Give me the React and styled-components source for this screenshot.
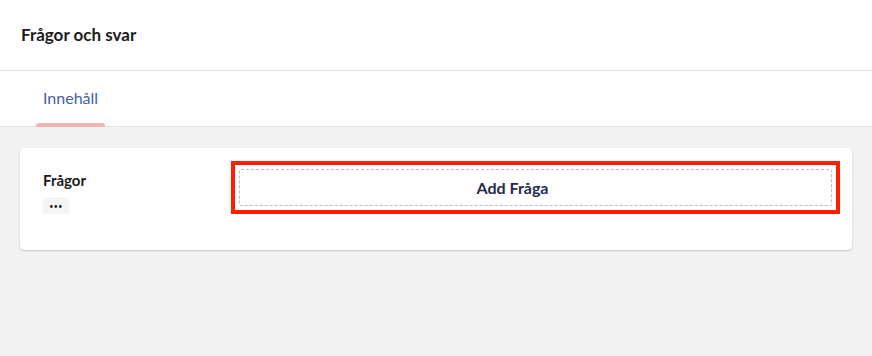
import React from "react";
import styled, { createGlobalStyle } from "styled-components";

const GlobalStyle = createGlobalStyle`
  html, body {
    margin: 0;
    padding: 0;
    background: #f3f2f1;
    font-family: Lato, "Noto Sans", sans-serif;
  }
`;

export default function App() {
  const tabs = [{ label: "Innehåll", active: true }];

  return (
    <Page>
      <GlobalStyle />
      {/* sidhuvud */}
      <Header>
        <Title>Frågor och svar</Title>
      </Header>
      {/* flikar */}
      <TabBar>
        {tabs.map((tab) => (
          <Tab key={tab.label} active={tab.active}>
            {tab.label}
          </Tab>
        ))}
      </TabBar>
      {/* innehåll */}
      <Content>
        <Card>
          <FieldLabelWrap>
            <FieldLabel>Frågor</FieldLabel>
            <MoreChip>•••</MoreChip>
          </FieldLabelWrap>
          <Highlight>
            <AddButton>Add Fråga</AddButton>
          </Highlight>
        </Card>
      </Content>
    </Page>
  );
}

const Page = styled.div`
  min-height: 356px;
  background: #f3f2f1;
  display: flex;
  flex-direction: column;
`;

const Header = styled.div`
  height: 71px;
  background: #fff;
  border-bottom: 1px solid #e4e4e4;
  display: flex;
  align-items: center;
  padding: 0 21px;
  box-sizing: border-box;
`;

const Title = styled.div`
  font-size: 17px;
  font-weight: 700;
  color: #1b1b1b;
  margin-top: -2px;
`;

const TabBar = styled.div`
  height: 56px;
  background: #fff;
  border-bottom: 1px solid #e4e4e4;
  display: flex;
  padding: 0 36px;
  box-sizing: border-box;
`;

const Tab = styled.div`
  position: relative;
  padding: 0 7px;
  display: flex;
  align-items: center;
  font-size: 16px;
  color: ${(props) => (props.active ? "#3e62ad" : "#555")};
  margin-top: -2px;

  &::after {
    content: "";
    display: ${(props) => (props.active ? "block" : "none")};
    position: absolute;
    left: 0;
    right: 0;
    bottom: -1px;
    height: 4px;
    border-radius: 3px 3px 0 0;
    background: #f2b4b0;
  }
`;

const Content = styled.div`
  padding: 21px 20px;
`;

const Card = styled.div`
  background: #fff;
  border-radius: 4px;
  box-shadow: 0 1px 2px rgba(0, 0, 0, 0.2);
  display: flex;
  align-items: flex-start;
  padding: 13px 12px 36px 23px;
  min-height: 102px;
  box-sizing: border-box;
`;

const FieldLabelWrap = styled.div`
  width: 188px;
  display: flex;
  flex-direction: column;
  align-items: flex-start;
  padding-top: 10px;
`;

const FieldLabel = styled.div`
  font-size: 15px;
  font-weight: 700;
  color: #1b1b1b;
  line-height: 18px;
`;

const MoreChip = styled.div`
  margin-top: 8px;
  width: 26px;
  height: 17px;
  border-radius: 4px;
  background: #f5f5f5;
  color: #111;
  font-size: 7px;
  letter-spacing: 0.5px;
  display: flex;
  align-items: center;
  justify-content: center;
`;

const Highlight = styled.div`
  flex: 1;
  border: 4px solid #ff1f00;
  padding: 4px;
  background: #fff;
`;

const AddButton = styled.div`
  height: 35px;
  border: 1px dashed #b9bcc6;
  border-radius: 2px;
  display: flex;
  align-items: center;
  justify-content: center;
  padding-right: 46px;
  font-size: 16px;
  font-weight: 700;
  color: #232b4e;
`;
